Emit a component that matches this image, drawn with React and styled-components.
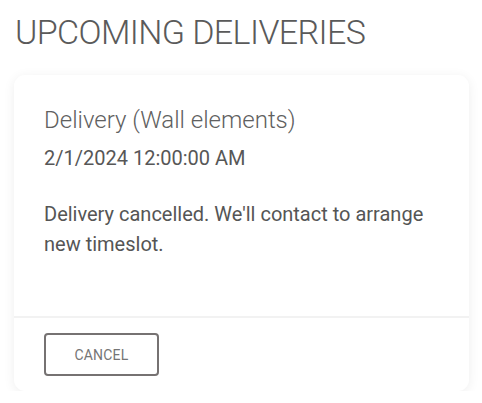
import React from "react";
import styled, { createGlobalStyle } from "styled-components";

const Global = createGlobalStyle`
  html, body { margin: 0; padding: 0; background: #fff; }
  body { font-family: Roboto, "Liberation Sans", sans-serif; color: #555; }
`;

const Page = styled.div`
  padding: 10px 13px 0 14px;
  width: 482px;
  box-sizing: border-box;
`;

const Heading = styled.h1`
  margin: 0 0 0 1px;
  font-family: Roboto, "Open Sans", sans-serif;
  font-weight: 300;
  font-size: 34px;
  line-height: 44px;
  letter-spacing: -0.6px;
  color: #5a5a5a;
`;

const Card = styled.div`
  margin-top: 21px;
  background: #fff;
  border-radius: 11px;
  box-shadow: 0 2px 12px rgba(0, 0, 0, 0.07);
  display: flex;
  flex-direction: column;
`;

const Body = styled.div`
  box-sizing: border-box;
  padding: 29px 30px 0;
  height: 241px;
`;

const Title = styled.h2`
  margin: 0;
  font-family: Roboto, "Open Sans", sans-serif;
  font-weight: 300;
  font-size: 24px;
  line-height: 32px;
  color: #606060;
`;

const DateLine = styled.div`
  margin-top: 10px;
  font-size: 20px;
  line-height: 24px;
  color: #575757;
`;

const Text = styled.p`
  margin: 29px 0 0;
  font-size: 20px;
  line-height: 30px;
`;

const Footer = styled.div`
  border-top: 2px solid #f2f2f2;
  padding: 15px 30px 15px;
  display: flex;
`;

const Button = styled.button`
  width: 115px;
  height: 43px;
  border: 2px solid #767272;
  border-radius: 4px;
  background: #fff;
  color: #757575;
  font-family: Roboto, sans-serif;
  font-size: 14px;
  font-weight: 400;
  letter-spacing: 0.2px;
  text-transform: uppercase;
  cursor: pointer;
`;

export default function App() {
  return (
    <>
      <Global />
      <Page>
        <Heading>UPCOMING DELIVERIES</Heading>
        <Card>
          <Body>
            <Title>Delivery (Wall elements)</Title>
            <DateLine>2/1/2024 12:00:00 AM</DateLine>
            <Text>Delivery cancelled. We'll contact to arrange new timeslot.</Text>
          </Body>
          <Footer>
            <Button>Cancel</Button>
          </Footer>
        </Card>
      </Page>
    </>
  );
}
